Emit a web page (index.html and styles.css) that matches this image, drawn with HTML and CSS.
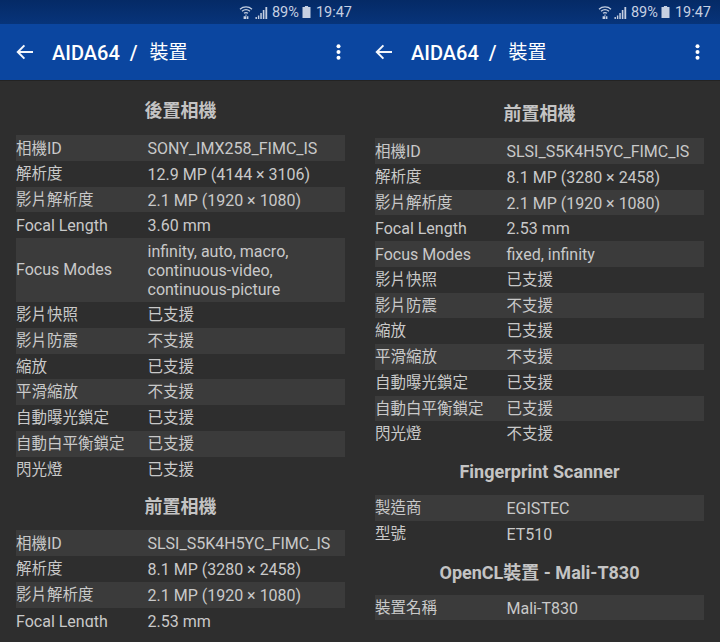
FILE: index.html
```html
<!DOCTYPE html>
<html lang="zh-Hant">
<head>
<meta charset="utf-8">
<title>AIDA64 / 裝置</title>
<link rel="stylesheet" href="styles.css">
</head>
<body>
<svg class="defs" width="0" height="0" aria-hidden="true">
  <symbol id="wifi" viewBox="0 0 14 14">
    <path d="M1 4.2C4.4 1.2 9.6 1.2 13 4.2M3 6.3C5.3 4.4 8.7 4.4 11 6.3M5 8.3C6.2 7.4 7.8 7.4 9 8.3" fill="none" stroke="currentColor" stroke-width="1.3"/>
    <path d="M7 9.2L8.2 10.6H5.8ZM4.6 11.2H7V14H4.6M7.6 11.2H9.4V14H7.6" fill="currentColor"/>
  </symbol>
  <symbol id="signal" viewBox="0 0 12 12">
    <path d="M0 10h1.4v2H0zM2.4 8.5h1.4V12H2.4zM4.8 6h1.5v6H4.8zM7.3 3h1.6v9H7.3zM9.9 0h1.8v12H9.9z" fill="currentColor"/>
  </symbol>
  <symbol id="battery" viewBox="0 0 8 12">
    <path d="M2.4 0h3.2v1H8v11H0V1h2.4z" fill="currentColor"/>
  </symbol>
  <symbol id="back" viewBox="0 0 18 16">
    <path d="M17 8H2M8.4 1.4L1.8 8l6.6 6.6" fill="none" stroke="currentColor" stroke-width="2"/>
  </symbol>
  <symbol id="more" viewBox="0 0 5 16">
    <circle cx="2.5" cy="2.2" r="2" fill="currentColor"/>
    <circle cx="2.5" cy="8" r="2" fill="currentColor"/>
    <circle cx="2.5" cy="13.8" r="2" fill="currentColor"/>
  </symbol>
</svg>
<main class="panes">
  <section class="pane pane-left">
    <div class="statusbar">
      <svg class="ic-wifi"><use href="#wifi"/></svg>
      <svg class="ic-signal"><use href="#signal"/></svg>
      <span class="pct">89%</span>
      <svg class="ic-battery"><use href="#battery"/></svg>
      <span class="clock">19:47</span>
    </div>
    <header class="appbar">
      <svg class="ic-back"><use href="#back"/></svg>
      <h1 class="apptitle">AIDA64<span class="sep">/</span><span class="cjk">裝置</span></h1>
      <svg class="ic-more"><use href="#more"/></svg>
    </header>
    <div class="content">
      <h2 class="section section-first">後置相機</h2>
      <div class="table">
        <div class="row"><span class="key"><span class="zh">相機</span>ID</span><span class="val">SONY_IMX258_FIMC_IS</span></div>
        <div class="row"><span class="key zh">解析度</span><span class="val">12.9 MP (4144 × 3106)</span></div>
        <div class="row"><span class="key zh">影片解析度</span><span class="val">2.1 MP (1920 × 1080)</span></div>
        <div class="row"><span class="key">Focal Length</span><span class="val">3.60 mm</span></div>
        <div class="row row-multi"><span class="key">Focus Modes</span><span class="val">infinity, auto, macro,<br>continuous-video,<br>continuous-picture</span></div>
        <div class="row"><span class="key zh">影片快照</span><span class="val zh">已支援</span></div>
        <div class="row"><span class="key zh">影片防震</span><span class="val zh">不支援</span></div>
        <div class="row"><span class="key zh">縮放</span><span class="val zh">已支援</span></div>
        <div class="row"><span class="key zh">平滑縮放</span><span class="val zh">不支援</span></div>
        <div class="row"><span class="key zh">自動曝光鎖定</span><span class="val zh">已支援</span></div>
        <div class="row"><span class="key zh">自動白平衡鎖定</span><span class="val zh">已支援</span></div>
        <div class="row"><span class="key zh">閃光燈</span><span class="val zh">已支援</span></div>
      </div>
      <h2 class="section section-zh">前置相機</h2>
      <div class="table">
        <div class="row"><span class="key"><span class="zh">相機</span>ID</span><span class="val">SLSI_S5K4H5YC_FIMC_IS</span></div>
        <div class="row"><span class="key zh">解析度</span><span class="val">8.1 MP (3280 × 2458)</span></div>
        <div class="row"><span class="key zh">影片解析度</span><span class="val">2.1 MP (1920 × 1080)</span></div>
        <div class="row"><span class="key">Focal Length</span><span class="val">2.53 mm</span></div>
      </div>
    </div>
  </section>
  <section class="pane pane-right">
    <div class="statusbar">
      <svg class="ic-wifi"><use href="#wifi"/></svg>
      <svg class="ic-signal"><use href="#signal"/></svg>
      <span class="pct">89%</span>
      <svg class="ic-battery"><use href="#battery"/></svg>
      <span class="clock">19:47</span>
    </div>
    <header class="appbar">
      <svg class="ic-back"><use href="#back"/></svg>
      <h1 class="apptitle">AIDA64<span class="sep">/</span><span class="cjk">裝置</span></h1>
      <svg class="ic-more"><use href="#more"/></svg>
    </header>
    <div class="content">
      <h2 class="section section-first">前置相機</h2>
      <div class="table">
        <div class="row"><span class="key"><span class="zh">相機</span>ID</span><span class="val">SLSI_S5K4H5YC_FIMC_IS</span></div>
        <div class="row"><span class="key zh">解析度</span><span class="val">8.1 MP (3280 × 2458)</span></div>
        <div class="row"><span class="key zh">影片解析度</span><span class="val">2.1 MP (1920 × 1080)</span></div>
        <div class="row"><span class="key">Focal Length</span><span class="val">2.53 mm</span></div>
        <div class="row"><span class="key">Focus Modes</span><span class="val">fixed, infinity</span></div>
        <div class="row"><span class="key zh">影片快照</span><span class="val zh">已支援</span></div>
        <div class="row"><span class="key zh">影片防震</span><span class="val zh">不支援</span></div>
        <div class="row"><span class="key zh">縮放</span><span class="val zh">已支援</span></div>
        <div class="row"><span class="key zh">平滑縮放</span><span class="val zh">不支援</span></div>
        <div class="row"><span class="key zh">自動曝光鎖定</span><span class="val zh">已支援</span></div>
        <div class="row"><span class="key zh">自動白平衡鎖定</span><span class="val zh">已支援</span></div>
        <div class="row"><span class="key zh">閃光燈</span><span class="val zh">不支援</span></div>
      </div>
      <h2 class="section">Fingerprint Scanner</h2>
      <div class="table">
        <div class="row"><span class="key zh">製造商</span><span class="val">EGISTEC</span></div>
        <div class="row"><span class="key zh">型號</span><span class="val">ET510</span></div>
      </div>
      <h2 class="section">OpenCL裝置 - Mali-T830</h2>
      <div class="table">
        <div class="row"><span class="key zh">裝置名稱</span><span class="val">Mali-T830</span></div>
      </div>
    </div>
  </section>
</main>
</body>
</html>
```

FILE: styles.css
```css
* { box-sizing: border-box; }

html, body {
  margin: 0;
  height: 642px;
  overflow: hidden;
  background: #2e2e2e;
}

body {
  font-family: Roboto, "Noto Sans CJK TC", sans-serif;
  color: #c9c9c9;
}

.defs { display: block; height: 0; }

.panes {
  display: grid;
  grid-template-columns: 360px 360px;
  height: 642px;
}

.pane {
  display: flex;
  flex-direction: column;
  height: 642px;
  min-width: 0;
}

.statusbar {
  height: 24px;
  flex: none;
  display: flex;
  align-items: center;
  justify-content: flex-end;
  background: linear-gradient(#052a66, #07347a);
  color: #c6d0e2;
  font-size: 14.5px;
  padding-right: 8px;
}

.pane-right .statusbar { padding-right: 9px; }

.ic-wifi { width: 14px; height: 14px; margin-right: 2px; }
.ic-signal { width: 13px; height: 12px; margin-right: 4px; margin-top: 2px; }
.ic-battery { width: 9px; height: 12px; margin: 0 5px 0 3px; }

.appbar {
  height: 56px;
  flex: none;
  display: flex;
  align-items: center;
  background: #0b46a0;
  color: #fff;
  padding-left: 16px;
  padding-right: 19px;
  box-shadow: 0 1px 0 #232323;
  position: relative;
}

.pane-right .appbar { padding-left: 15px; padding-right: 20px; }

.ic-back { width: 18px; height: 16px; flex: none; color: #f4f7fc; }
.ic-more { width: 5px; height: 16px; flex: none; margin-left: auto; color: #fff; }

.apptitle {
  margin: 2px 0 0 18px;
  font-size: 20px;
  font-weight: 500;
  line-height: 28px;
  display: flex;
  align-items: center;
}

.sep { margin: 0 12px 0 10px; font-weight: 500; }
.cjk { font-weight: 400; font-size: 19px; }

.content {
  flex: none;
  height: 547px;
  overflow: hidden;
  padding: 7px 15px 0 16px;
}

.pane-right .content { padding: 10px 16px 0 15px; }

.section {
  margin: 0;
  height: 48px;
  display: flex;
  align-items: center;
  justify-content: center;
  font-size: 18px;
  font-weight: 700;
  color: #c4c4c4;
  white-space: pre;
}

.section-first { padding-bottom: 4px; }
.section-zh { padding-bottom: 2px; }

.row {
  display: flex;
  align-items: center;
  height: 25.75px;
  font-size: 16px;
  line-height: 23.75px;
  padding-top: 2px;
}

.row:nth-child(odd) { background: #3b3b3b; }

.key { flex: none; width: 131.5px; }
.val { flex: 1; }

.zh { font-size: 15.5px; }

.row-multi { height: 64px; padding-top: 0; }
.row-multi .val { line-height: 19px; }
```
